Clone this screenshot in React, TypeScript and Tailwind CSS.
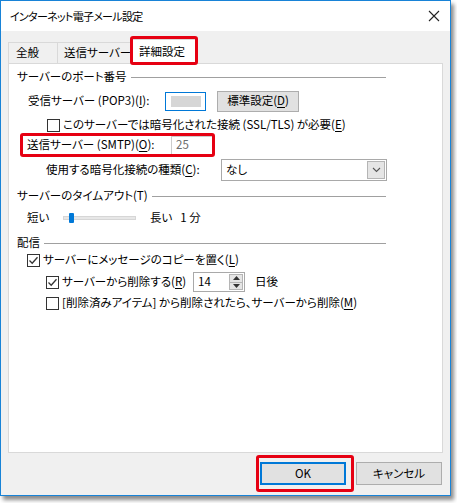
import React from "react";

const font = "font-['Meiryo_UI','Noto_Sans_CJK_JP',sans-serif] [font-feature-settings:'palt']";

function Check({ checked }: { checked?: boolean }) {
  return (
    <span className="w-[13px] h-[13px] border border-[#333] bg-white flex items-center justify-center shrink-0">
      {checked && (
        <svg width="11" height="11" viewBox="0 0 11 11">
          <path d="M1.5 5.5 L4.2 8.2 L9.5 2.2" fill="none" stroke="#333" strokeWidth="1.3" />
        </svg>
      )}
    </span>
  );
}

function U({ c }: { c: string }) {
  return <span className="underline underline-offset-2">{c}</span>;
}

function Group({ label }: { label: string }) {
  return (
    <div className="flex items-center h-[16px] w-[369px]">
      <span className="whitespace-nowrap">{label}</span>
      <div className="flex-1 h-px bg-[#a0a0a0] ml-[4px]" />
    </div>
  );
}

export default function App() {
  return (
    <div className={`w-[457px] h-[503px] bg-white text-[11.5px] leading-none text-black ${font}`}>
      <div className="relative w-[451px] h-[496px] border border-[#1883d7] bg-[#f0f0f0] flex flex-col shadow-[3px_4px_4px_rgba(0,0,0,0.45)]">
        {/* title bar */}
        <div className="h-[30px] bg-white flex items-center justify-between pl-[9px] pr-[10px] shrink-0">
          <span className="text-[11px] tracking-[-0.7px]">インターネット電子メール設定</span>
          <svg width="12" height="12" viewBox="0 0 12 12">
            <path d="M1 1 L11 11 M11 1 L1 11" stroke="#222" strokeWidth="1.1" />
          </svg>
        </div>

        <div className="px-[7px] pt-[7px]">
          {/* tabs */}
          <div className="flex items-end h-[25px] whitespace-nowrap">
            <div className="h-[21px] w-[50px] border border-b-0 border-[#d9d9d9] bg-[#f0f0f0] flex items-center pl-[7px]">全般</div>
            <div className="h-[21px] w-[73px] border border-b-0 border-l-0 border-[#d9d9d9] bg-[#f0f0f0] flex items-center pl-[6px]">送信サーバー</div>
            <div className="h-[25px] w-[66px] border border-b-0 border-[#d9d9d9] bg-white flex items-center pl-[7px] -mb-px relative z-10">詳細設定</div>
          </div>

          {/* panel */}
          <div className="h-[390px] border border-[#d9d9d9] bg-white pl-[8px] pt-[5px] flex flex-col whitespace-nowrap">
            <Group label="サーバーのポート番号" />

            <div className="flex items-center h-[22px] mt-[5px] pl-[11px]">
              <span className="w-[137px]">受信サーバー (POP3)(<U c="I" />):</span>
              <div className="w-[41px] h-[19px] border border-[#0078d7] flex items-center justify-center">
                <div className="w-[30px] h-[11px] bg-[#d6d6d6]" />
              </div>
              <div className="ml-[11px] w-[82px] h-[21px] border border-[#adadad] bg-[#e1e1e1] flex items-center justify-center">
                標準設定(<U c="D" />)
              </div>
            </div>

            <div className="flex items-center h-[18px] mt-[4px] pl-[30px] gap-[3px]">
              <Check />
              <span>このサーバーでは暗号化された接続 (SSL/TLS) が必要(<U c="E" />)</span>
            </div>

            <div className="flex items-center h-[20px] mt-[1px] pl-[10px]">
              <span className="w-[144px]">送信サーバー (SMTP)(<U c="O" />):</span>
              <div className="w-[42px] h-[19px] border border-[#cccccc] flex items-center pl-[4px] text-[#6d6d6d]">25</div>
            </div>

            <div className="flex items-center h-[22px] mt-[4px] pl-[29px]">
              <span className="w-[175px]">使用する暗号化接続の種類(<U c="C" />):</span>
              <div className="w-[166px] h-[22px] border border-[#a9a9a9] flex items-center justify-between pl-[4px] pr-px">
                <span>なし</span>
                <div className="w-[18px] h-[18px] bg-[#e5e5e5] border border-[#b5b5b5] flex items-center justify-center">
                  <svg width="9" height="6" viewBox="0 0 9 6">
                    <path d="M1 1 L4.5 4.5 L8 1" fill="none" stroke="#555" strokeWidth="1.1" />
                  </svg>
                </div>
              </div>
            </div>

            <div className="mt-[7px]">
              <Group label="サーバーのタイムアウト(T)" />
            </div>

            <div className="flex items-center h-[18px] mt-[5px] pl-[10px]">
              <span className="w-[36px]">短い</span>
              <div className="relative w-[73px] h-[4px] bg-[#e7e7e7] border border-[#d6d6d6]">
                <div className="absolute left-[5px] -top-[4px] w-[5px] h-[10px] bg-[#0078d7] rounded-[1px]" />
              </div>
              <span className="ml-[14px]">長い</span>
              <span className="ml-[8px]">1 分</span>
            </div>

            <div className="mt-[8px]">
              <Group label="配信" />
            </div>

            <div className="flex items-center h-[18px] pl-[10px] gap-[3px]">
              <Check checked />
              <span>サーバーにメッセージのコピーを置く(<U c="L" />)</span>
            </div>

            <div className="flex items-center h-[20px] mt-[3px] pl-[29px]">
              <div className="flex items-center gap-[3px] w-[147px]">
                <Check checked />
                <span>サーバーから削除する(<U c="R" />)</span>
              </div>
              <div className="w-[52px] h-[20px] border border-[#a9a9a9] flex items-center justify-between pl-[4px] pr-px">
                <span>14</span>
                <div className="w-[14px] h-[16px] flex flex-col border border-[#b5b5b5] bg-[#e5e5e5]">
                  <div className="flex-1 flex items-center justify-center border-b border-[#b5b5b5]">
                    <svg width="7" height="4" viewBox="0 0 7 4"><path d="M0 4 L3.5 0 L7 4Z" fill="#333" /></svg>
                  </div>
                  <div className="flex-1 flex items-center justify-center">
                    <svg width="7" height="4" viewBox="0 0 7 4"><path d="M0 0 L3.5 4 L7 0Z" fill="#333" /></svg>
                  </div>
                </div>
              </div>
              <span className="ml-[10px]">日後</span>
            </div>

            <div className="flex items-center h-[18px] mt-[2px] pl-[29px] gap-[3px]">
              <Check />
              <span>[削除済みアイテム] から削除されたら、サーバーから削除(<U c="M" />)</span>
            </div>
          </div>

          {/* footer */}
          <div className="flex justify-end gap-[10px] mt-[9px] pr-[1px]">
            <div className="w-[86px] h-[23px] border-2 border-[#0078d7] bg-[#e1e1e1] flex items-center justify-center">OK</div>
            <div className="w-[86px] h-[23px] border border-[#adadad] bg-[#e1e1e1] flex items-center justify-center">キャンセル</div>
          </div>
        </div>

        {/* red highlights */}
        <div className="absolute left-[129px] top-[35px] w-[68px] h-[29px] border-[3px] border-[#e60012] rounded-[3px] z-20" />
        <div className="absolute left-[19px] top-[132px] w-[195px] h-[24px] border-[3px] border-[#e60012] rounded-[3px] z-20" />
        <div className="absolute left-[255px] top-[454px] w-[98px] h-[37px] border-[3px] border-[#e60012] rounded-[3px] z-20" />
      </div>
    </div>
  );
}
